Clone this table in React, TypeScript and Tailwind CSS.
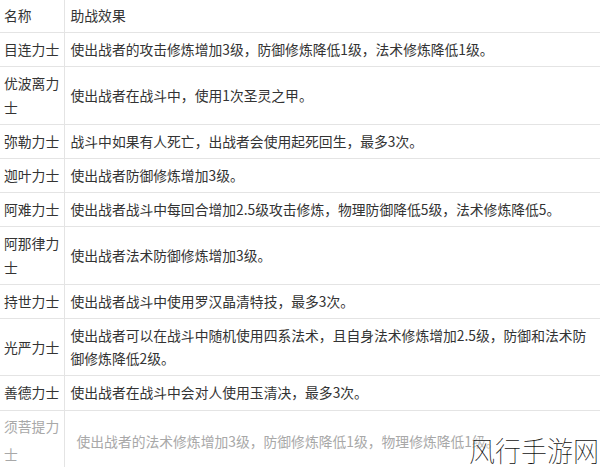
import React from 'react';

const rows: { name: string; effect: string }[] = [
  { name: '目连力士', effect: '使出战者的攻击修炼增加3级，防御修炼降低1级，法术修炼降低1级。' },
  { name: '优波离力士', effect: '使出战者在战斗中，使用1次圣灵之甲。' },
  { name: '弥勒力士', effect: '战斗中如果有人死亡，出战者会使用起死回生，最多3次。' },
  { name: '迦叶力士', effect: '使出战者防御修炼增加3级。' },
  { name: '阿难力士', effect: '使出战者战斗中每回合增加2.5级攻击修炼，物理防御降低5级，法术修炼降低5。' },
  { name: '阿那律力士', effect: '使出战者法术防御修炼增加3级。' },
  { name: '持世力士', effect: '使出战者战斗中使用罗汉晶清特技，最多3次。' },
  {
    name: '光严力士',
    effect: '使出战者可以在战斗中随机使用四系法术，且自身法术修炼增加2.5级，防御和法术防御修炼降低2级。',
  },
  { name: '善德力士', effect: '使出战者在战斗中会对人使用玉清决，最多3次。' },
];

const font = { fontFamily: '"Noto Sans CJK SC", "Noto Sans", sans-serif' };

export default function App() {
  return (
    <div className="relative w-[600px] h-[467px] overflow-hidden bg-white" style={font}>
      <table className="w-[600px] border-collapse text-[13.8px] leading-[23.2px] text-[#333]">
        <colgroup>
          <col className="w-[64px]" />
          <col />
        </colgroup>
        <tbody>
          <tr className="border-b border-[#e4e4e4]">
            <td className="pl-[4px] pr-[2px] pt-[4px] pb-[5px] align-middle border-r border-[#e4e4e4]">名称</td>
            <td className="pl-[6px] pt-[4px] pb-[5px] align-middle">助战效果</td>
          </tr>
          {rows.map((r) => (
            <tr key={r.name} className="border-b border-[#e4e4e4]">
              <td className="pl-[4px] pr-[1px] py-[5px] align-middle border-r border-[#e4e4e4]">{r.name}</td>
              <td className="pl-[6px] pr-[8px] py-[5px] align-middle">{r.effect}</td>
            </tr>
          ))}
          <tr className="text-[#a8a8a8]">
            <td className="pl-[4px] pr-[1px] pt-[1px] pb-[5px] align-top border-r border-[#e4e4e4] leading-[28px]">须菩提力士</td>
            <td className="pl-[12px] py-[5px] align-middle">使出战者的法术修炼增加3级，防御修炼降低1级，物理修炼降低1级。</td>
          </tr>
        </tbody>
      </table>
      <div
        className="absolute right-[1px] bottom-[3px] text-[26px] leading-none font-thin text-[#111] scale-y-110 origin-bottom"
        style={{ textShadow: '0 0 2px #fff, 0 0 3px #fff, 0 0 4px #fff' }}
      >
        风行手游网
      </div>
    </div>
  );
}
